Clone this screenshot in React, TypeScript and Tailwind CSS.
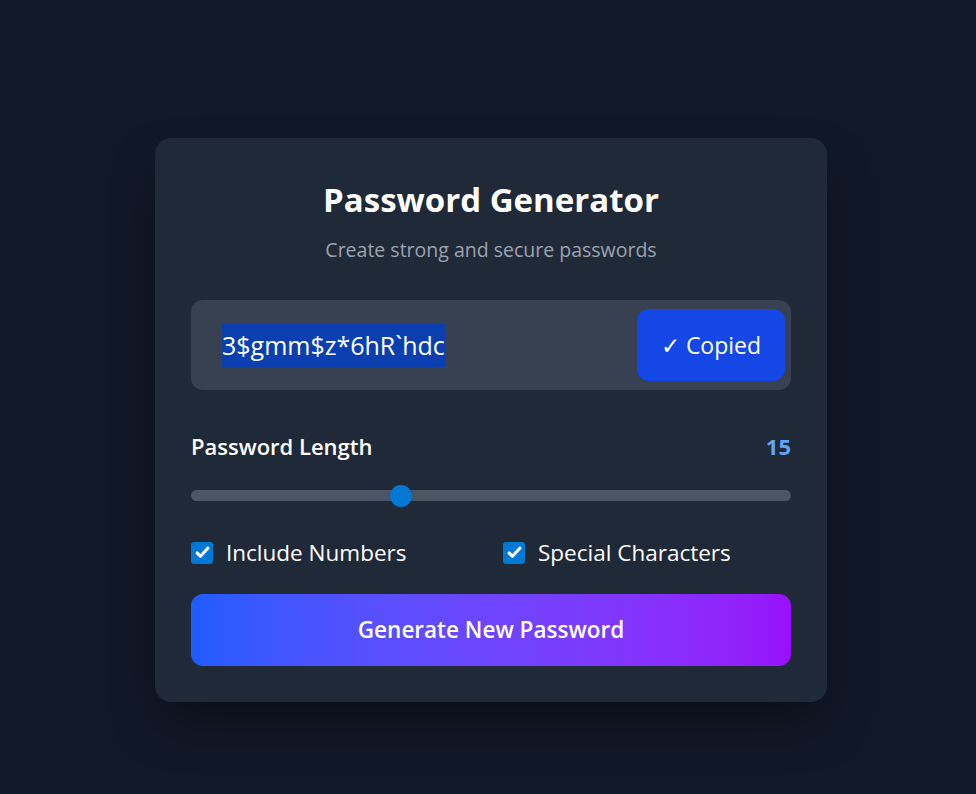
import React from "react";

const CheckBox: React.FC<{ label: string }> = ({ label }) => (
  <label className="flex items-center gap-[13px]">
    <span className="flex h-[22px] w-[22px] items-center justify-center rounded-[3px] bg-[#0078d4]">
      <svg viewBox="0 0 16 16" className="h-[17px] w-[17px]">
        <path d="M3 8.5l3 3 7-7.5" fill="none" stroke="white" strokeWidth="3" strokeLinecap="round" strokeLinejoin="round" />
      </svg>
    </span>
    <span className="text-[22.5px] text-white">{label}</span>
  </label>
);

export default function App() {
  const length = 15;
  const pct = 0.35;

  return (
    <div
      className="flex min-h-[794px] items-start justify-center bg-[#111827] pl-[6px] pt-[138px]"
      style={{ fontFamily: '"Open Sans", "Noto Sans", sans-serif' }}
    >
      <div className="w-[672px] rounded-2xl bg-[#1f2937] p-9 shadow-[0_25px_50px_-12px_rgba(0,0,0,0.5)]">
        <h1 className="pt-2 text-center text-[33px] font-bold leading-[36px] text-white">Password Generator</h1>
        <p className="mt-[18px] text-center text-[19.5px] leading-[28px] text-[#9ca3af]">
          Create strong and secure passwords
        </p>

        <div className="mt-9 flex h-[90px] items-center justify-between rounded-xl bg-[#374151] pl-[31px] pr-[6px]">
          <span className="bg-[#0b3faf] text-[25px] leading-[43px] text-white">3$gmm$z*6hR`hdc</span>
          <button className="flex h-[72px] w-[148px] items-center justify-center rounded-xl bg-[#1447e6] text-[23px] text-white">
            ✓ Copied
          </button>
        </div>

        <div className="mt-[42px] flex items-center justify-between">
          <span className="text-[22px] font-semibold leading-[28px] text-white">Password Length</span>
          <span className="text-[22px] font-bold leading-[28px] text-[#60a5fa]">{length}</span>
        </div>

        <div className="relative mt-[30px] h-[11px] rounded-full bg-[#4b5563]">
          <span
            className="absolute top-1/2 h-[22px] w-[22px] -translate-x-1/2 -translate-y-1/2 rounded-full bg-[#0078d4]"
            style={{ left: `${pct * 100}%` }}
          />
        </div>

        <div className="mt-[35px] grid grid-cols-2 gap-6">
          <CheckBox label="Include Numbers" />
          <CheckBox label="Special Characters" />
        </div>

        <button className="mt-[24px] h-[72px] w-full rounded-xl bg-gradient-to-r from-[#1d5cff] to-[#9810fa] text-[22.5px] font-semibold text-white">
          Generate New Password
        </button>
      </div>
    </div>
  );
}
